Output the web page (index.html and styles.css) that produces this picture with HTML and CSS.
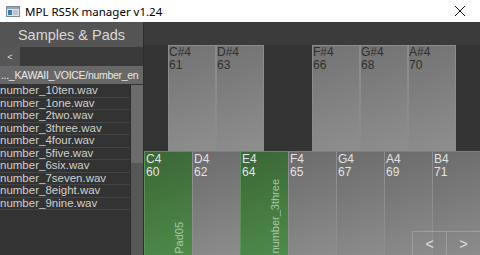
FILE: index.html
```html
<!DOCTYPE html>
<html>
<head>
    <meta charset="UTF-8">
    <link rel="stylesheet" href="styles.css">
</head>
<body>
    <div class="titlebar">
        <svg class="app-icon" width="14" height="11" viewBox="0 0 14 11">
            <rect x="0.5" y="0.5" width="13" height="10" fill="#dfe6ee" stroke="#7d8b99"/>
            <rect x="1" y="1" width="12" height="2" fill="#8fa6bf"/>
            <rect x="2" y="4" width="4" height="5" fill="#3f77b8"/>
            <rect x="7" y="4" width="5" height="5" fill="#b9c4cf"/>
        </svg>
        <span class="title">MPL RS5K manager v1.24</span>
        <svg class="close" width="12" height="12" viewBox="0 0 12 12">
            <path d="M1 1 L11 11 M11 1 L1 11" stroke="#111" stroke-width="1"/>
        </svg>
    </div>

    <div class="main">
        <div class="sidebar">
            <div class="side-header">Samples &amp; Pads</div>
            <div class="nav-row">
                <div class="back-btn">&lt;</div>
            </div>
            <div class="path-row">..._KAWAII_VOICE/number_en</div>
            <div class="list-wrap">
                <div class="file-list">
                    <div class="file">number_10ten.wav</div>
                    <div class="file">number_1one.wav</div>
                    <div class="file">number_2two.wav</div>
                    <div class="file">number_3three.wav</div>
                    <div class="file">number_4four.wav</div>
                    <div class="file">number_5five.wav</div>
                    <div class="file">number_6six.wav</div>
                    <div class="file">number_7seven.wav</div>
                    <div class="file">number_8eight.wav</div>
                    <div class="file">number_9nine.wav</div>
                </div>
                <div class="scrollbar">
                    <div class="thumb"></div>
                </div>
            </div>
        </div>

        <div class="keyboard">
            <div class="top-band"></div>
            <div class="black-row">
                <div class="bkey k-cs"><span>C#4</span><span>61</span></div>
                <div class="bkey k-ds"><span>D#4</span><span>63</span></div>
                <div class="bkey k-fs"><span>F#4</span><span>66</span></div>
                <div class="bkey k-gs"><span>G#4</span><span>68</span></div>
                <div class="bkey k-as"><span>A#4</span><span>70</span></div>
            </div>
            <div class="white-row">
                <div class="wkey loaded"><span>C4</span><span>60</span><div class="pad-name">Pad05</div></div>
                <div class="wkey"><span>D4</span><span>62</span></div>
                <div class="wkey loaded"><span>E4</span><span>64</span><div class="pad-name">number_3three</div></div>
                <div class="wkey"><span>F4</span><span>65</span></div>
                <div class="wkey"><span>G4</span><span>67</span></div>
                <div class="wkey"><span>A4</span><span>69</span></div>
                <div class="wkey"><span>B4</span><span>71</span></div>
            </div>
            <div class="octave-nav">
                <div class="oct-btn">&lt;</div>
                <div class="oct-btn">&gt;</div>
            </div>
        </div>
    </div>
</body>
</html>
```

FILE: styles.css
```css
html, body {
    margin: 0;
    padding: 0;
    width: 480px;
    height: 255px;
    overflow: hidden;
    background: #333;
    font-family: "Liberation Sans", Arial, sans-serif;
}
.titlebar {
    height: 22px;
    background: #fff;
    display: flex;
    align-items: center;
}
.app-icon {
    margin-left: 6px;
    margin-right: 5px;
}
.title {
    font-family: "Noto Sans", "Liberation Sans", sans-serif;
    font-size: 11.5px;
    color: #000;
}
.close {
    margin-left: auto;
    margin-right: 14px;
}
.main {
    display: flex;
    height: 233px;
}
.sidebar {
    width: 143px;
    display: flex;
    flex-direction: column;
    border-right: 1px solid #2e2e2e;
}
.side-header {
    height: 25px;
    flex-shrink: 0;
    background: #545454;
    color: #d8d8d8;
    font-size: 14.5px;
    display: flex;
    align-items: center;
    justify-content: center;
}
.nav-row {
    height: 19px;
    flex-shrink: 0;
    background: #3a3a3a;
    display: flex;
}
.back-btn {
    width: 20px;
    background: #565656;
    color: #ddd;
    font-size: 9px;
    display: flex;
    align-items: center;
    justify-content: center;
}
.path-row {
    height: 18px;
    flex-shrink: 0;
    background: #686868;
    color: #e8e8e8;
    font-size: 10.5px;
    letter-spacing: -0.3px;
    line-height: 18px;
    padding-left: 1px;
    white-space: nowrap;
    overflow: hidden;
}
.list-wrap {
    flex: 1;
    display: flex;
    background: #333;
    padding-top: 1px;
}
.file-list {
    width: 130px;
    border-right: 1px solid #2c2c2c;
}
.file {
    height: 11.5px;
    line-height: 11.5px;
    font-size: 11.5px;
    color: #cfcfcf;
    border-bottom: 1px solid #444;
    white-space: nowrap;
}
.scrollbar {
    flex: 1;
    background: #575757;
}
.thumb {
    height: 78px;
    background: #6c6c6c;
}
.keyboard {
    flex: 1;
    display: flex;
    flex-direction: column;
    position: relative;
    min-width: 0;
}
.top-band {
    height: 23px;
    flex-shrink: 0;
    background: #3b3b3b;
}
.black-row {
    height: 106px;
    flex-shrink: 0;
    background: #343434;
    display: grid;
    grid-template-columns: repeat(14, 1fr);
}
.bkey {
    background: linear-gradient(160deg, #727272, #8f8f8f);
    border: 1px solid #8c8c8c;
    border-bottom: none;
    color: #303030;
    font-size: 12px;
    line-height: 13px;
    display: flex;
    flex-direction: column;
}
.k-cs { grid-column: 2 / 4; }
.k-ds { grid-column: 4 / 6; }
.k-fs { grid-column: 8 / 10; }
.k-gs { grid-column: 10 / 12; }
.k-as { grid-column: 12 / 14; }
.white-row {
    flex: 1;
    min-height: 0;
    display: grid;
    grid-template-columns: repeat(7, 1fr);
}
.wkey {
    background: linear-gradient(160deg, #6b6b6b, #8d8d8d);
    border-left: 1px solid #8e8e8e;
    border-top: 1px solid #7e7e7e;
    color: #e2e2e2;
    font-size: 12px;
    line-height: 13px;
    display: flex;
    flex-direction: column;
    padding-left: 1px;
    padding-top: 1px;
}
.wkey.loaded {
    background: linear-gradient(160deg, #3a6636, #4f8c4a);
    border-left-color: #5a9455;
    border-top-color: #5a9455;
}
.pad-name {
    margin-top: auto;
    align-self: flex-end;
    margin-right: 6px;
    margin-bottom: 3px;
    writing-mode: vertical-rl;
    transform: rotate(180deg);
    font-size: 11px;
    line-height: 14px;
    color: #a8c8a2;
}
.octave-nav {
    position: absolute;
    right: 0;
    bottom: 0;
    display: flex;
    height: 23px;
    border-top: 1px solid rgba(255, 255, 255, 0.2);
    border-left: 1px solid rgba(255, 255, 255, 0.2);
}
.oct-btn {
    width: 33px;
    color: #e0e0e0;
    font-size: 14px;
    display: flex;
    align-items: center;
    justify-content: center;
}
.oct-btn + .oct-btn {
    border-left: 1px solid rgba(255, 255, 255, 0.2);
}
```
